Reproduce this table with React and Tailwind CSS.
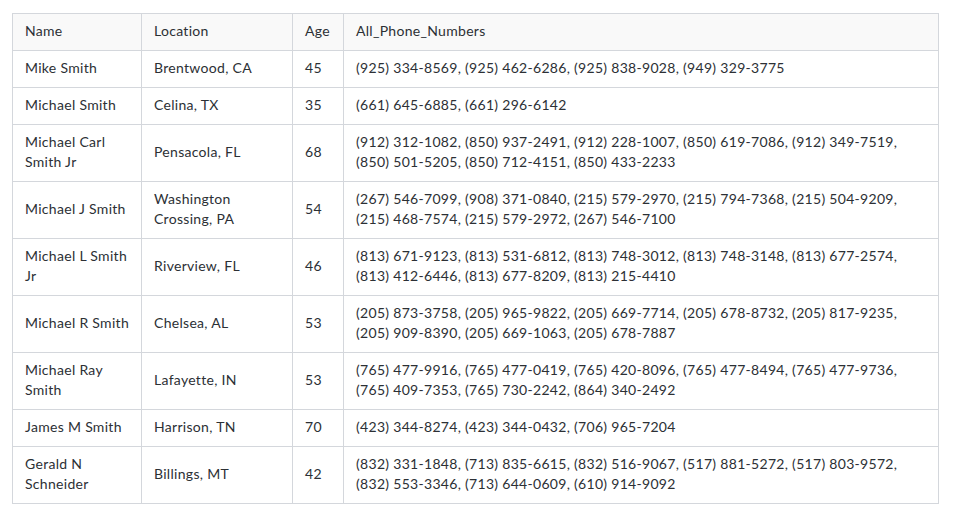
const rows = [
  { name: ["Mike Smith"], loc: ["Brentwood, CA"], age: "45", phones: ["(925) 334-8569, (925) 462-6286, (925) 838-9028, (949) 329-3775"] },
  { name: ["Michael Smith"], loc: ["Celina, TX"], age: "35", phones: ["(661) 645-6885, (661) 296-6142"] },
  { name: ["Michael Carl", "Smith Jr"], loc: ["Pensacola, FL"], age: "68", phones: ["(912) 312-1082, (850) 937-2491, (912) 228-1007, (850) 619-7086, (912) 349-7519,", "(850) 501-5205, (850) 712-4151, (850) 433-2233"] },
  { name: ["Michael J Smith"], loc: ["Washington", "Crossing, PA"], age: "54", phones: ["(267) 546-7099, (908) 371-0840, (215) 579-2970, (215) 794-7368, (215) 504-9209,", "(215) 468-7574, (215) 579-2972, (267) 546-7100"] },
  { name: ["Michael L Smith", "Jr"], loc: ["Riverview, FL"], age: "46", phones: ["(813) 671-9123, (813) 531-6812, (813) 748-3012, (813) 748-3148, (813) 677-2574,", "(813) 412-6446, (813) 677-8209, (813) 215-4410"] },
  { name: ["Michael R Smith"], loc: ["Chelsea, AL"], age: "53", phones: ["(205) 873-3758, (205) 965-9822, (205) 669-7714, (205) 678-8732, (205) 817-9235,", "(205) 909-8390, (205) 669-1063, (205) 678-7887"] },
  { name: ["Michael Ray", "Smith"], loc: ["Lafayette, IN"], age: "53", phones: ["(765) 477-9916, (765) 477-0419, (765) 420-8096, (765) 477-8494, (765) 477-9736,", "(765) 409-7353, (765) 730-2242, (864) 340-2492"] },
  { name: ["James M Smith"], loc: ["Harrison, TN"], age: "70", phones: ["(423) 344-8274, (423) 344-0432, (706) 965-7204"] },
  { name: ["Gerald N", "Schneider"], loc: ["Billings, MT"], age: "42", phones: ["(832) 331-1848, (713) 835-6615, (832) 516-9067, (517) 881-5272, (517) 803-9572,", "(832) 553-3346, (713) 644-0609, (610) 914-9092"] },
];

function Lines({ lines }) {
  return lines.map((l, i) => (
    <span key={i}>
      {i > 0 && <br />}
      {l}
    </span>
  ));
}

export default function App() {
  const td = "border border-[#d4d7dc] px-3 pt-[7px] pb-[9px] align-middle";
  return (
    <div className="bg-white w-[953px] h-[517px] pt-[13px] pl-[12px]" style={{ fontFamily: "Lato, 'Noto Sans', sans-serif" }}>
      <table className="table-fixed border-collapse text-[14px] leading-[20px] tracking-[0.3px] text-[#2c3035] w-[927px]">
        <colgroup>
          <col className="w-[129px]" />
          <col className="w-[151px]" />
          <col className="w-[51px]" />
          <col />
        </colgroup>
        <thead>
          <tr className="bg-[#f9f9f9]">
            <th className={`${td} text-left font-normal`}>Name</th>
            <th className={`${td} text-left font-normal`}>Location</th>
            <th className={`${td} text-left font-normal`}>Age</th>
            <th className={`${td} text-left font-normal`}>All_Phone_Numbers</th>
          </tr>
        </thead>
        <tbody>
          {rows.map((r, i) => (
            <tr key={i}>
              <td className={td}><Lines lines={r.name} /></td>
              <td className={td}><Lines lines={r.loc} /></td>
              <td className={td}>{r.age}</td>
              <td className={td}><Lines lines={r.phones} /></td>
            </tr>
          ))}
        </tbody>
      </table>
    </div>
  );
}
